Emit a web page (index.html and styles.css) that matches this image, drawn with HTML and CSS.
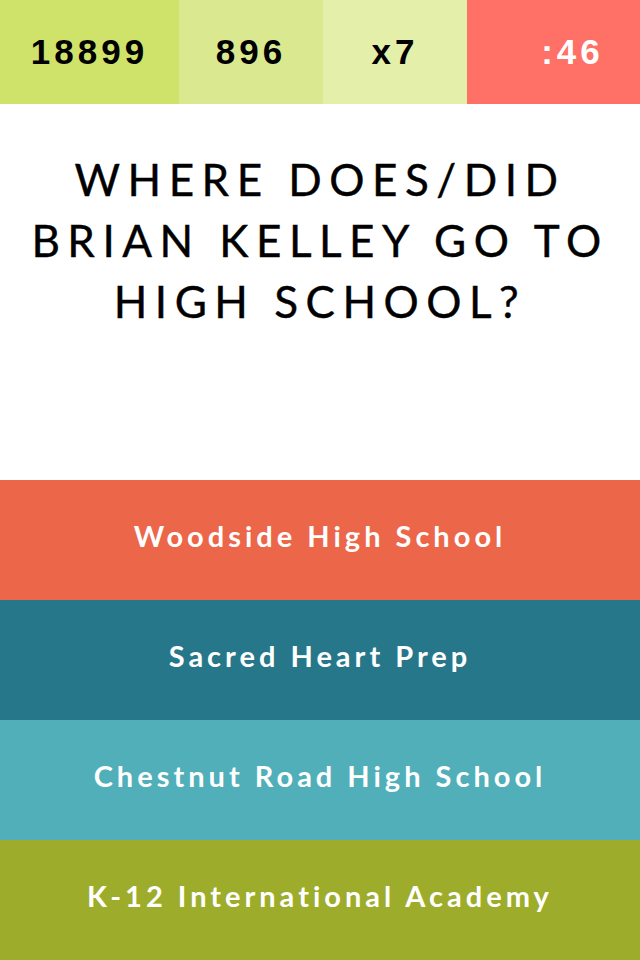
FILE: index.html
```html
<!DOCTYPE html>
<html>
<head>
<meta charset="utf-8">
<link rel="stylesheet" href="styles.css">
</head>
<body>
<div class="app">
  <div class="stats">
    <div class="stat stat-score">18899</div>
    <div class="stat stat-points">896</div>
    <div class="stat stat-mult">x7</div>
    <div class="stat stat-timer">:46</div>
  </div>
  <div class="question">
    <h1 class="question-text">WHERE DOES/DID<br>BRIAN KELLEY GO TO<br>HIGH SCHOOL?</h1>
  </div>
  <div class="answers">
    <div class="answer answer-1">Woodside High School</div>
    <div class="answer answer-2">Sacred Heart Prep</div>
    <div class="answer answer-3">Chestnut Road High School</div>
    <div class="answer answer-4">K-12 International Academy</div>
  </div>
</div>
</body>
</html>
```

FILE: styles.css
```css
html, body {
  margin: 0;
  padding: 0;
  background: #ffffff;
}
.app {
  width: 640px;
  height: 960px;
  display: flex;
  flex-direction: column;
  font-family: "Lato", "DejaVu Sans", sans-serif;
}
.stats {
  display: flex;
  height: 104px;
}
.stat {
  display: flex;
  align-items: center;
  justify-content: center;
  font-family: "Liberation Sans", sans-serif;
  font-weight: 700;
  font-size: 35px;
  letter-spacing: 4px;
  color: #000;
}
.stat-score { width: 179px; background: #cfe36a; }
.stat-points { width: 144px; background: #dae98f; }
.stat-mult { width: 144px; background: #e4efaa; }
.stat-timer { width: 173px; background: #ff7066; color: #fff; padding-left: 38px; box-sizing: border-box; }
.question {
  height: 376px;
  display: flex;
  justify-content: center;
  padding-top: 45px;
  box-sizing: border-box;
}
.question-text {
  margin: 0;
  font-weight: 400;
  font-size: 44px;
  line-height: 61px;
  letter-spacing: 7.5px;
  text-align: center;
  color: #000;
  -webkit-text-stroke: 0.4px #000;
}
.answers {
  display: flex;
  flex-direction: column;
}
.answer {
  height: 120px;
  display: flex;
  align-items: center;
  justify-content: center;
  padding-bottom: 10px;
  box-sizing: border-box;
  color: #fff;
  font-weight: 700;
  font-size: 29px;
  letter-spacing: 4px;
}
.answer-1 { background: #ec664a; }
.answer-2 { background: #27778a; }
.answer-3 { background: #50afb9; }
.answer-4 { background: #9dad2b; }
```
